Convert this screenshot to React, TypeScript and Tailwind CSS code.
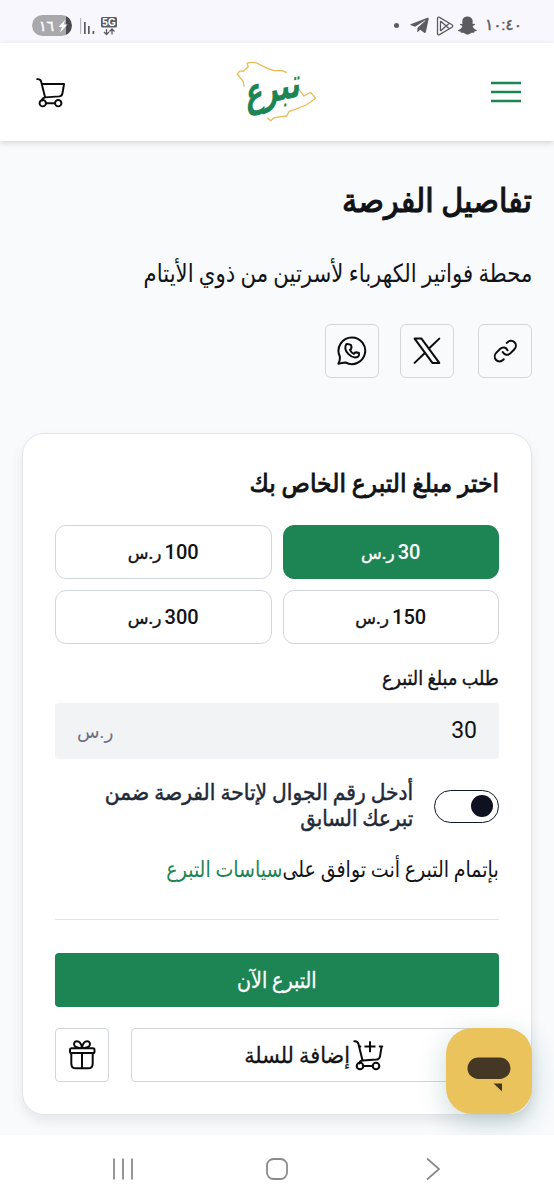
import { useState, type ReactNode } from "react";
import { FaSnapchatGhost, FaTelegramPlane } from "react-icons/fa";

const AMOUNTS = [30, 100, 150, 300];

function CartIcon({ plus = false, size = 32 }: { plus?: boolean; size?: number }) {
  return (
    <svg width={size} height={size} viewBox="0 0 32 32" fill="none" stroke="#0b0b0b" strokeWidth="2" strokeLinecap="round" strokeLinejoin="round">
      <path d="M2.3 2.2c2.4-.2 3.6.6 4.1 2.6l4 16.2" />
      {plus ? (
        <>
          <path d="M7.2 7.6h1.2M30.3 7.6h-2.6M29.6 7.6 28 17.4c-.4 2.2-1.4 3-3.4 3.2L10.4 21.4c-2 .2-3 1.2-3.2 3" />
          <path d="M12.5 7.6h11M18 2.2v11" strokeLinecap="butt" />
        </>
      ) : (
        <path d="M7.2 7.2H30L28.3 17c-.4 2.2-1.2 2.8-3.2 3L10.4 21c-2 .2-3 1.3-3.2 3.3" />
      )}
      <circle cx="8" cy="27" r="3.3" />
      <circle cx="24" cy="27" r="3.3" />
      <path d="M11.3 27h9.4" />
    </svg>
  );
}

function GiftIcon() {
  return (
    <svg width="30" height="32" viewBox="0 0 30 32" fill="none" stroke="#0b0b0b" strokeWidth="2" strokeLinecap="round" strokeLinejoin="round">
      <rect x="3" y="9.2" width="24.5" height="4.9" rx="1.6" />
      <path d="M4.3 14.4v10c0 3 1.7 4.9 4.7 4.9h12c3 0 4.7-1.9 4.7-4.9v-10M15 14.4v14.9" />
      <path d="M15 9c-.6-4.2-2.6-6.7-5.3-6.7-2.4 0-3.4 2.6-2.1 4.5C8.8 8.3 11 9 15 9ZM15 9c.6-4.2 2.6-6.7 5.3-6.7 2.4 0 3.4 2.6 2.1 4.5C21.2 8.3 19 9 15 9Z" />
    </svg>
  );
}

function WhatsappIcon() {
  return (
    <svg width="32" height="32" viewBox="0 0 32 32" fill="none" stroke="#0b0b0b" strokeWidth="2" strokeLinecap="round" strokeLinejoin="round">
      <path d="M16 2.5A13.3 13.3 0 1 1 9.6 27.5c-2.3.1-4.6.8-7.2 1.3 1.2-2.3 1.8-4.8 1.4-7.3A13.3 13.3 0 0 1 16 2.5Z" />
      <path d="M10.3 9.2c-2 3.3-.5 7.2 2.2 9.9s6.7 4.3 9.9 2.2c.9-.6.9-1.8.5-3.3-2.4-1-4.2-.8-5 .9-1.9-.9-3.1-2.2-4-4 1.7-.9 2-2.5 1-5-1.5-.5-3.6-1.2-4.6-.7Z" />
    </svg>
  );
}

function XIcon() {
  return (
    <svg width="32" height="32" viewBox="0 0 32 32" fill="none" stroke="#0b0b0b" strokeWidth="2" strokeLinecap="round" strokeLinejoin="round">
      <path d="M3.6 3.6h6.9l17.8 24.3h-6.9ZM3.6 27.9 14.1 17.8M17.7 13.8 28.3 3.6" />
    </svg>
  );
}

function LinkIcon() {
  return (
    <svg width="40" height="40" viewBox="0 0 40 40" fill="none" stroke="#0b0b0b" strokeWidth="2" strokeLinecap="round" strokeLinejoin="round">
      <path d="M18.8 28.3l-.6.5c-2.1 2.1-5.2 2.2-7.1.2s-1.8-5.3.3-7.4l3.9-3.8c2.3-2.3 5.9-1.7 7.3 1.5" />
      <path d="M21.7 11.9l.6-.5c2.1-2.1 5.3-2.1 7.2-.1s1.8 5.1-.3 7.2l-3.9 3.9c-2.3 2.3-5.9 1.6-7.6-1.4" />
    </svg>
  );
}

function Logo() {
  return (
    <svg width="84" height="64" viewBox="0 0 84 64" fill="none" className="mr-[3px] overflow-visible">
      <path
        d="M9 26.5 8.3 21.7 2.3 14l2.4-2.9 4-.1 4.6-4.3L12 3.3c3-1.2 7-1.2 10.3 0l10 5 6.7 2.4h8.3l4.4 2M60 24.3 69 36l6.7-3.7 5 6-9.4 6.7L54 51.7 51.7 56 39 57.7l-3.3 3-3.4-3"
        stroke="#e6bd55"
        strokeWidth="1.3"
        strokeLinejoin="round"
      />
      <text
        x="0"
        y="0"
        textAnchor="middle"
        direction="rtl"
        transform="translate(38 42) rotate(-12) skewX(-14) scale(0.9 1.35)"
        className="fill-[#1d8454] text-[30px] font-bold [font-family:'DejaVu_Sans',sans-serif]"
      >
        تبرع
      </text>
    </svg>
  );
}

function ShareButton({ children }: { children: ReactNode }) {
  return (
    <button className="flex h-[54px] w-[54px] items-center justify-center rounded-md border border-[#d4d6da]">
      {children}
    </button>
  );
}

function StatusBar() {
  return (
    <div dir="ltr" className="flex h-[43px] items-center justify-between bg-[#f8f7fe] px-8 pt-2 text-[#5c5c60]">
      <div className="flex items-center">
        <div className="flex h-[21px] w-10 items-center justify-end overflow-hidden rounded-full bg-[linear-gradient(90deg,#a9a9ad_85%,#4a4a4d_85%)] pr-1 text-white">
          <span className="text-sm leading-none [-webkit-text-stroke:0.4px]">١٦</span>
          <svg width="10" height="14" viewBox="0 0 10 14" className="ml-1" fill="currentColor">
            <path d="M7.5.5.5 8H4l-2 5.500 7.500-8h-4Z" />
          </svg>
        </div>
        <svg width="16" height="18" viewBox="0 0 16 18" className="ml-2" fill="currentColor">
          <path d="M0 1h1.2v16H0z" opacity=".4" />
          <path d="M4 5h1.7v12H4zM8 9h1.7v8H8zM12.5 14h1.7v3h-1.7z" />
        </svg>
        <svg width="17" height="20" viewBox="0 0 17 20" className="ml-[5px]">
          <rect x="0" y="1" width="16" height="10.5" rx="1.5" fill="#5c5c60" />
          <text x="8" y="9.9" textAnchor="middle" className="fill-white text-[10px] font-bold [font-family:'Liberation_Sans',sans-serif]">
            5G
          </text>
          <path d="M5.5 13v5M3 16l2.5 2.5L8 16M11 18.5v-5M8.5 15.5 11 13l2.5 2.5" fill="none" stroke="#5c5c60" strokeWidth="1.3" />
        </svg>
      </div>
      <div className="flex items-center">
        <span className="h-[5px] w-[5px] rounded-full bg-current" />
        <FaTelegramPlane size={21} className="ml-2.5" />
        <svg width="18" height="20" viewBox="0 0 18 20" className="ml-1.5" fill="none" stroke="currentColor" strokeWidth="1.3" strokeLinejoin="round">
          <path d="M1.5 2.5C1.5 1.2 2.5.8 3.5 1.4L16 8.8c1 .6 1 1.8 0 2.4L3.5 18.6c-1 .6-2 .2-2-1.1ZM4.5 5v10M4.5 5l8.5 7.5M4.5 15 13 7.5" />
        </svg>
        <FaSnapchatGhost size={19} className="ml-1" />
        <span className="ml-2 text-[15.5px] leading-none [-webkit-text-stroke:0.4px]">١٠:٤٠</span>
      </div>
    </div>
  );
}

export default function App() {
  const [amount, setAmount] = useState(30);
  const [enabled, setEnabled] = useState(true);

  return (
    <div
      dir="rtl"
      lang="ar"
      className="relative flex h-[1200px] w-[554px] flex-col overflow-hidden bg-[#f8fafc] text-[#111317] [font-family:Roboto,'DejaVu_Sans',sans-serif]"
    >
      <StatusBar />

      <header className="z-10 flex h-[98px] shrink-0 items-center justify-between bg-white px-[33px] shadow-[0_2px_6px_rgba(0,0,0,0.15)]">
        <button>
          <svg width="30" height="22" viewBox="0 0 30 22" stroke="#1d8454" strokeWidth="2.5">
            <path d="M0 2h30M0 11h30M0 20h30" />
          </svg>
        </button>
        <Logo />
        <button className="pl-0.5">
          <CartIcon size={31} />
        </button>
      </header>

      <main className="flex flex-1 flex-col px-[22px]">
        <h1 className="mt-[38px] h-11 text-[33px] leading-[44px] whitespace-nowrap [-webkit-text-stroke:1.2px]">
          <span className="inline-block origin-right scale-x-[0.918]">تفاصيل الفرصة</span>
        </h1>
        <p className="mt-[31px] h-10 text-[25px] leading-10 whitespace-nowrap">
          <span className="inline-block origin-right scale-x-[0.85]">محطة فواتير الكهرباء لأسرتين من ذوي الأيتام</span>
        </p>

        <div className="mt-[30px] flex gap-6">
          <ShareButton><LinkIcon /></ShareButton>
          <ShareButton><XIcon /></ShareButton>
          <div className="-mr-[3px]">
            <ShareButton><WhatsappIcon /></ShareButton>
          </div>
        </div>

        <section className="mt-[55px] flex h-[682px] flex-col rounded-[22px] border border-[#e4e6ea] bg-white px-8 pt-8 shadow-[0_6px_12px_rgba(0,0,0,0.08)]">
          <h2 className="h-9 text-[25px] leading-9 whitespace-nowrap [-webkit-text-stroke:0.9px]">
            <span className="inline-block origin-right scale-x-[0.938]">اختر مبلغ التبرع الخاص بك</span>
          </h2>

          <div className="mt-[23px] grid grid-cols-2 gap-[11px]">
            {AMOUNTS.map((value) => (
              <button
                key={value}
                onClick={() => setAmount(value)}
                className={`h-[54px] rounded-[11px] border text-[20px] font-medium [word-spacing:-2px] ${
                  amount === value
                    ? "border-[#1d8454] bg-[#1d8454] text-white"
                    : "border-[#d3d5dc] bg-white"
                }`}
              >
                {value} <span className="text-[17px] [-webkit-text-stroke:0.4px]">ر.س</span>
              </button>
            ))}
          </div>

          <label className="mt-[20px] h-7 text-[20px] leading-7 whitespace-nowrap [-webkit-text-stroke:0.4px]">
            <span className="inline-block origin-right scale-x-[0.88]">طلب مبلغ التبرع</span>
          </label>
          <div className="mt-[11px] flex h-14 items-center justify-between rounded bg-[#f2f3f5] px-[22px]">
            <span className="text-[23px]">{amount}</span>
            <span className="pt-1 text-[18.5px] text-[#6b7280]">ر.س</span>
          </div>

          <div className="mt-[21px] flex h-[52px] items-center gap-[21px]">
            <button
              onClick={() => setEnabled(!enabled)}
              className={`flex h-[33px] w-[65px] shrink-0 items-center rounded-full border border-[#111827] px-[5px] ${enabled ? "justify-start" : "justify-end"}`}
            >
              <span className="h-[22px] w-[22px] rounded-full bg-[#0d1120]" />
            </button>
            <p className="text-[22px] leading-[26px] whitespace-nowrap text-[#1f2937] [-webkit-text-stroke:0.5px]">
              <span className="block origin-right scale-x-[0.92]">أدخل رقم الجوال لإتاحة الفرصة ضمن</span>
              <span className="block origin-right scale-x-[0.9]">تبرعك السابق</span>
            </p>
          </div>

          <p className="mt-[22px] h-8 text-[22px] leading-8 whitespace-nowrap">
            <span className="inline-block origin-right scale-x-[0.864]">
              بإتمام التبرع أنت توافق على&zwnj;<a className="text-[#1d8454]">سياسات التبرع</a>
            </span>
          </p>

          <hr className="mt-[33px] border-[#e2e4e8]" />

          <button className="mt-[33px] h-[54px] rounded bg-[#1d8454] text-[22px] text-white [-webkit-text-stroke:0.3px]">
            <span className="inline-block scale-x-[0.87]">التبرع الآن</span>
          </button>
          <div className="mt-[21px] flex gap-[22px]">
            <button className="flex h-[54px] flex-1 items-center justify-center rounded border border-[#d3d5dc] pr-0.5 text-[22px] [-webkit-text-stroke:0.3px]">
              <CartIcon plus />
              <span className="mr-[3px] -ml-1.5 inline-block origin-right scale-x-[0.945]">إضافة للسلة</span>
            </button>
            <button className="flex h-[54px] w-[54px] items-center justify-center rounded border border-[#d3d5dc]">
              <GiftIcon />
            </button>
          </div>
        </section>
      </main>

      <button className="absolute top-[1028px] left-[446px] flex h-[86px] w-[86px] items-center justify-center rounded-[26px] bg-[#ebc35c] shadow-[0_8px_28px_rgba(20,80,90,0.22)]">
        <svg width="44" height="36" viewBox="0 0 44 36" className="mt-2" fill="#443824">
          <rect x="0.5" y="0.5" width="43" height="21.5" rx="10.7" />
          <path d="M26.5 26.5H35v8Z" />
        </svg>
      </button>

      <nav dir="ltr" className="z-10 flex h-[65px] shrink-0 items-center justify-between bg-white pt-0.5 pr-[113px] pl-[112px]">
        <svg width="22" height="24" viewBox="0 0 22 24" stroke="#8b8b8b" strokeWidth="1.8">
          <path d="M2 1.5v21M11 1.5v21M20 1.5v21" />
        </svg>
        <svg width="24" height="24" viewBox="0 0 24 24" className="-ml-[5px]" fill="none" stroke="#8b8b8b" strokeWidth="1.8">
          <rect x="2" y="2" width="20" height="20" rx="6.5" />
        </svg>
        <svg width="16" height="24" viewBox="0 0 16 24" fill="none" stroke="#8b8b8b" strokeWidth="1.8">
          <path d="m2 1.5 12 10.5L2 22.5" />
        </svg>
      </nav>
    </div>
  );
}
